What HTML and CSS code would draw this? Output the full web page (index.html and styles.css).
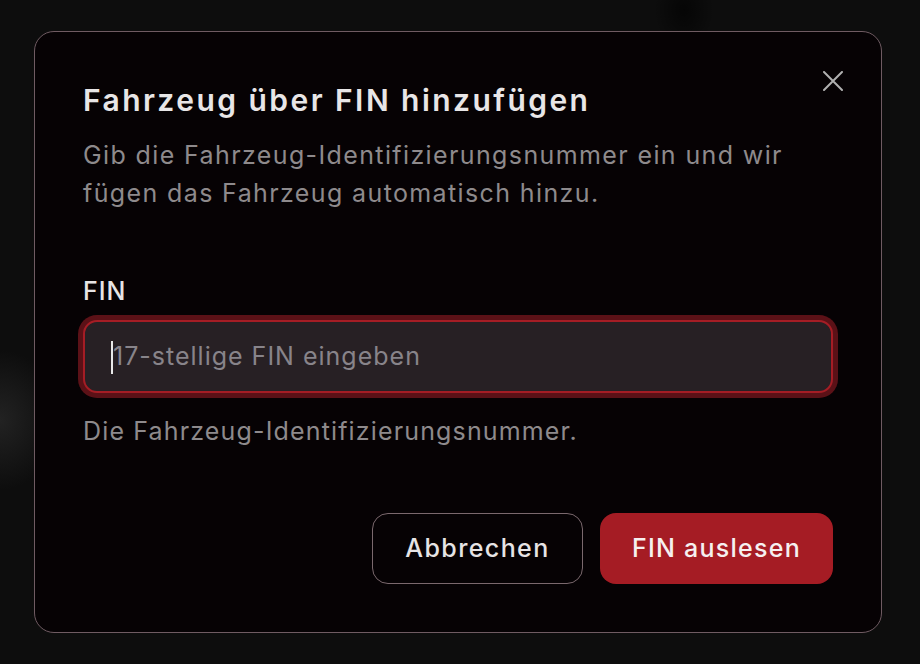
FILE: index.html
```html
<!DOCTYPE html>
<html lang="de">
<head>
<meta charset="utf-8">
<title>Fahrzeug über FIN hinzufügen</title>
<link rel="stylesheet" href="styles.css">
</head>
<body>
  <div class="backdrop">
    <div class="dialog" role="dialog" aria-labelledby="dlg-title">
      <button class="close" aria-label="Schließen">
        <svg width="20" height="20" viewBox="0 0 20 20" fill="none" stroke="currentColor" stroke-width="2" stroke-linecap="round">
          <path d="M1 1 19 19M19 1 1 19"/>
        </svg>
      </button>
      <h2 id="dlg-title" class="title">Fahrzeug über FIN hinzufügen</h2>
      <p class="desc">Gib die Fahrzeug-Identifizierungsnummer ein und wir fügen das Fahrzeug automatisch hinzu.</p>
      <div class="field">
        <label class="label" for="fin">FIN</label>
        <div class="input"><span class="caret"></span><span class="placeholder">17-stellige FIN eingeben</span></div>
        <p class="helper">Die Fahrzeug-Identifizierungsnummer.</p>
      </div>
      <div class="actions">
        <button class="btn btn-outline">Abbrechen</button>
        <button class="btn btn-primary">FIN auslesen</button>
      </div>
    </div>
  </div>
</body>
</html>
```

FILE: styles.css
```css
* { box-sizing: border-box; }
html, body { margin: 0; padding: 0; }
body {
  width: 920px;
  height: 664px;
  overflow: hidden;
  font-family: "Inter", "Noto Sans", sans-serif;
  background:
    radial-gradient(ellipse 60px 70px at 0px 420px, rgba(60,60,60,0.45), rgba(0,0,0,0) 100%),
    radial-gradient(ellipse 30px 40px at 684px 10px, rgba(0,0,0,0.6), rgba(0,0,0,0) 100%),
    #0d0d0d;
}
.backdrop {
  width: 920px;
  height: 664px;
  display: flex;
  align-items: center;
  justify-content: center;
}
.dialog {
  position: relative;
  width: 848px;
  height: 602px;
  margin-left: -4px;
  margin-top: -1px;
  background: #060204;
  border: 1.5px solid #6f5b62;
  border-radius: 20px;
  padding: 50px 48px 48px 48px;
  display: flex;
  flex-direction: column;
}
.close {
  position: absolute;
  top: 39px;
  right: 38px;
  width: 20px;
  height: 20px;
  padding: 0;
  border: 0;
  background: none;
  color: #b0b0b0;
  display: flex;
}
.title {
  margin: 0;
  font-size: 30px;
  line-height: 36px;
  font-weight: 600;
  color: #e8e6e7;
  letter-spacing: 2.45px;
}
.desc {
  margin: 18px 0 0 0;
  font-size: 25px;
  line-height: 38px;
  color: #8e8a8c;
  letter-spacing: 1.38px;
}
.field {
  margin-top: 61px;
  display: flex;
  flex-direction: column;
}
.label {
  font-size: 25px;
  line-height: 36px;
  font-weight: 500;
  color: #e6e4e5;
  letter-spacing: 1px;
}
.input {
  margin-top: 11px;
  height: 73px;
  border: 2px solid #a51d25;
  border-radius: 14px;
  background: #272024;
  box-shadow: 0 0 0 5px #5b1117;
  display: flex;
  align-items: center;
  padding-left: 26px;
}
.caret {
  width: 2px;
  height: 33px;
  background: #e8e8e8;
  margin-top: 2px;
}
.placeholder {
  font-size: 25px;
  color: #88848a;
  letter-spacing: 1px;
}
.helper {
  margin: 20px 0 0 0;
  font-size: 25px;
  line-height: 36px;
  color: #8e8a8c;
  letter-spacing: 1.15px;
}
.actions {
  margin-top: auto;
  display: flex;
  justify-content: flex-end;
  gap: 17px;
}
.btn {
  height: 71px;
  border-radius: 16px;
  font-family: inherit;
  font-size: 25px;
  font-weight: 500;
  padding: 0;
}
.btn-outline {
  width: 211px;
  background: transparent;
  border: 1.5px solid #7a686d;
  color: #e6e4e5;
  letter-spacing: 1.4px;
}
.btn-primary {
  width: 233px;
  background: #a51c24;
  border: 0;
  color: #f6f0f0;
  letter-spacing: 1.25px;
}
```
